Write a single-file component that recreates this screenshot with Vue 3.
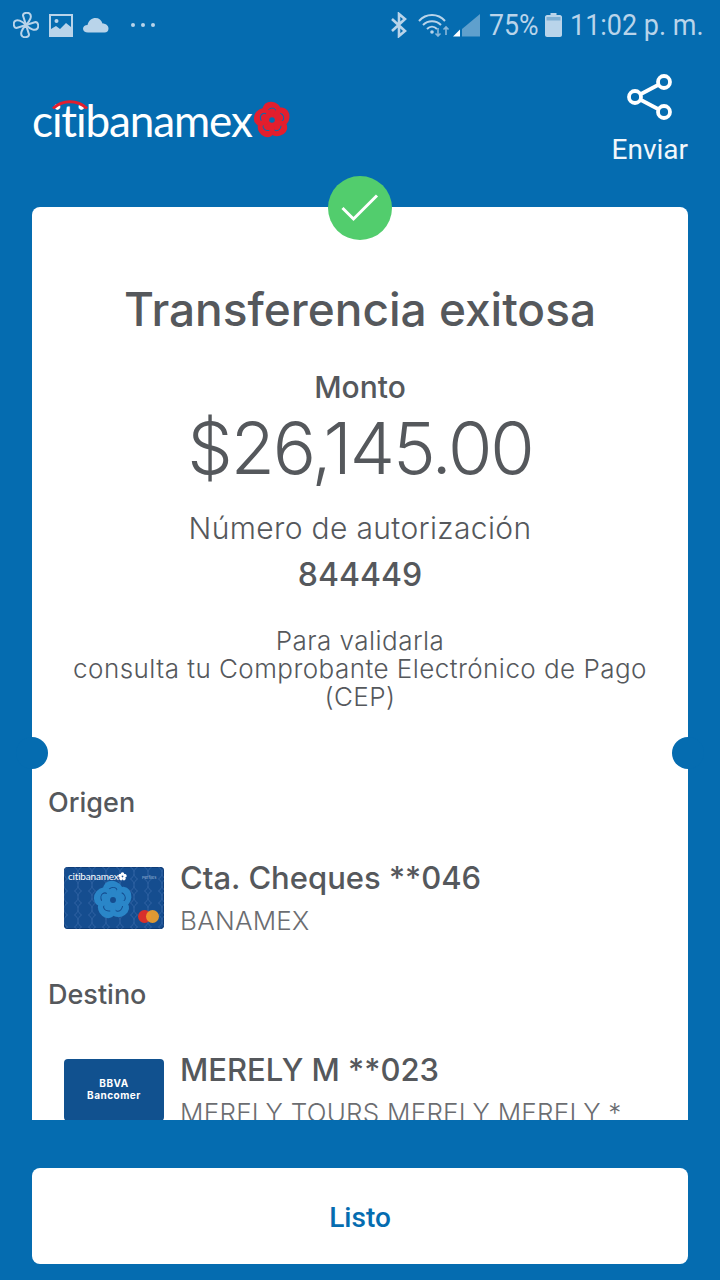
<template>
  <div class="screen">
    <div class="status">
      <div class="status-left">
        <svg class="ic" width="26" height="26" viewBox="0 0 26 26" fill="none" stroke="#b9d4ea" stroke-width="2">
          <path v-for="a in blades" :key="a" :transform="`rotate(${a} 13 13)`" d="M13 13L10 3.500C10 1 14 0 16.500 1.500 19.500 4 17 9 13 13z" />
        </svg>
        <svg class="ic" width="24" height="24" viewBox="0 0 24 24">
          <path fill="#b9d4ea" fill-rule="evenodd" d="M0 1h24v23H0zM2 3v19h20V3z" />
          <circle cx="7.500" cy="8" r="2" fill="#b9d4ea" />
          <path fill="#b9d4ea" d="M2 22v-6l5-3 4 3 6-6 5 4v8z" />
        </svg>
        <svg class="ic" width="26" height="16" viewBox="0 0 26 16">
          <path fill="#b9d4ea" d="M5 15.500C2 15.500 0 14 0 11.800 0 9.500 2 8 4.500 8 5.500 3.500 9 1 12.500 1c3.500 0 6 2 7 5.500 3.500 0 6 2.200 6 5 0 2.500-1.500 4-4 4z" />
        </svg>
        <div class="dots"><i></i><i></i><i></i></div>
      </div>
      <div class="status-right">
        <svg width="18" height="26" viewBox="0 0 18 26" fill="none" stroke="#b9d4ea" stroke-width="2.600">
          <path d="M2 7l13 12-6 5V2l6 5L2 19" />
        </svg>
        <svg class="wifi" width="36" height="24" viewBox="0 0 36 24" fill="none" stroke="#b9d4ea" stroke-width="2">
          <path d="M1 8c7-8 19-8 26 0" />
          <path d="M5 12c5-5 13-5 18 0" />
          <path d="M9 16c3-3 7-3 10 0" />
          <circle cx="14" cy="19" r="1.800" fill="#b9d4ea" stroke="none" />
          <path d="M20 15v8M17.500 20.500l2.500 2.500 2.500-2.500" stroke="#8ab8da" stroke-width="1.600" />
          <path d="M28 22v-8M25.500 16.500l2.500-2.500 2.500 2.500" stroke="#8ab8da" stroke-width="1.600" />
        </svg>
        <svg class="signal" width="27" height="24" viewBox="0 0 27 24">
          <path fill="#fff" d="M0 23.500l7-7v7z" />
          <path fill="#b9d4ea" fill-opacity=".5" d="M9 23.500V16L27 1v22.500z" />
        </svg>
        <span class="pct">75%</span>
        <svg class="batt" width="17" height="24" viewBox="0 0 17 24">
          <path fill="#b9d4ea" d="M5.500 0h6v2H15c1 0 2 1 2 2v18c0 1-1 2-2 2H2c-1 0-2-1-2-2V4c0-1 1-2 2-2h3.500z" />
          <path fill="#7fb0d4" d="M1.500 4h14v3.500h-14z" />
        </svg>
        <span class="time">11:02 p. m.</span>
      </div>
    </div>

    <div class="head">
      <div class="logo">
        <svg class="logo-arc" width="36" height="10" viewBox="0 0 36 10" fill="none">
          <path d="M1 9.500C10.500 .5 25.500 .5 35 9.500" stroke="#e31e2d" stroke-width="3" />
        </svg>
        <span class="logo-text">citibanamex</span>
        <svg class="logo-flower" width="38" height="38" viewBox="0 0 38 38">
          <g v-for="a in petals" :key="a" :transform="`rotate(${a} 19 19)`">
            <ellipse cx="19" cy="9" rx="9.500" ry="8" transform="rotate(22 19 9)" fill="#e31e2d" />
            <path d="M15 9c2-2 5-2.500 7-1 1 1 1.500 2 1 3.500" fill="none" stroke="#056cb0" stroke-width="1" />
          </g>
          <circle cx="19" cy="19" r="2.800" fill="#056cb0" />
        </svg>
      </div>
      <div class="share">
        <svg width="46" height="46" viewBox="0 0 46 46" fill="none" stroke="#fff" stroke-width="3.800">
          <circle cx="37" cy="8" r="6" />
          <circle cx="8" cy="23" r="6" />
          <circle cx="37" cy="38" r="6" />
          <path d="M13.500 20.200l18-9.400M13.500 25.800l18 9.400" />
        </svg>
        <span>Enviar</span>
      </div>
    </div>

    <div class="card-wrap">
      <div class="check">
        <svg width="40" height="30" viewBox="0 0 40 30" fill="none" stroke="#fff" stroke-width="3">
          <path d="M2.500 15l11 11L37 2.500" />
        </svg>
      </div>
      <i class="notch left"></i>
      <i class="notch right"></i>
      <div class="card">
        <h1>Transferencia exitosa</h1>
        <div class="monto-label">Monto</div>
        <div class="monto">$26,145.00</div>
        <div class="auth-label">Número de autorización</div>
        <div class="auth">844449</div>
        <p class="note">Para validarla<br />consulta tu Comprobante Electrónico de Pago<br />(CEP)</p>

        <div class="section">Origen</div>
        <div class="acct">
          <div class="bank-card">
            <svg class="card-bg" width="100" height="62">
              <defs>
                <pattern id="rings" width="14" height="12" patternUnits="userSpaceOnUse">
                  <circle cx="7" cy="6" r="7" fill="none" stroke="#3a6cab" stroke-width=".6" />
                </pattern>
              </defs>
              <rect width="100" height="62" fill="url(#rings)" />
            </svg>
            <div class="mini-logo">citibanamex</div>
            <svg class="mini-mark" width="9" height="9" viewBox="0 0 38 38">
              <circle v-for="a in petals" :key="a" :transform="`rotate(${a} 19 19)`" cx="19" cy="8.500" r="7.500" fill="#fff" />
            </svg>
            <span class="perfiles">Perfiles</span>
            <svg class="mini-flower" width="40" height="40" viewBox="0 0 38 38">
              <g v-for="a in petals" :key="a" :transform="`rotate(${a} 19 19)`">
                <ellipse cx="19" cy="9" rx="9.500" ry="8" transform="rotate(22 19 9)" fill="#2a86c8" />
                <path d="M15 9c2-2 5-2.500 7-1 1 1 1.500 2 1 3.500" fill="none" stroke="#154d8f" stroke-width="1" />
              </g>
              <circle cx="19" cy="19" r="2.800" fill="#154d8f" />
            </svg>
            <i class="mc red"></i>
            <i class="mc amber"></i>
          </div>
          <div class="acct-text">
            <div class="acct-name">Cta. Cheques **046</div>
            <div class="acct-sub">BANAMEX</div>
          </div>
        </div>

        <div class="section dest">Destino</div>
        <div class="acct">
          <div class="bbva">BBVA<br />Bancomer</div>
          <div class="acct-text">
            <div class="acct-name">MERELY M **023</div>
            <div class="acct-sub">MERELY TOURS MERELY MERELY *</div>
          </div>
        </div>
      </div>
    </div>

    <div class="foot">
      <button class="done">Listo</button>
    </div>
  </div>
</template>

<script setup>
const petals = [0, 72, 144, 216, 288]
const blades = [0, 90, 180, 270]
</script>

<style>
body {
  margin: 0;
}
</style>

<style scoped>
.screen {
  width: 720px;
  height: 1280px;
  background: #056cb0;
  display: flex;
  flex-direction: column;
  overflow: hidden;
  font-family: Inter, "Open Sans", sans-serif;
  color: #55585c;
}
.status {
  height: 48px;
  flex: none;
  display: flex;
  justify-content: space-between;
  align-items: center;
  padding: 2px 17px 0 13px;
  box-sizing: border-box;
}
.status-left,
.status-right {
  display: flex;
  align-items: center;
}
.status-left .ic {
  margin-right: 10px;
}
.dots {
  display: flex;
  gap: 6px;
  margin-left: 12px;
}
.dots i {
  width: 4px;
  height: 4px;
  border-radius: 50%;
  background: #b9d4ea;
}
.status-right {
  font-family: Roboto, sans-serif;
  font-size: 29px;
  color: #b9d4ea;
}
.wifi {
  margin-left: 10px;
}
.signal {
  margin-left: -1px;
}
.pct {
  margin-left: 9px;
  width: 48px;
  white-space: nowrap;
  transform: scaleX(0.92);
  transform-origin: left;
}
.batt {
  margin-left: 8px;
}
.time {
  margin-left: 8px;
  width: 133px;
  white-space: nowrap;
  transform: scaleX(0.93);
  transform-origin: left;
}
.head {
  height: 152px;
  flex: none;
  display: flex;
  justify-content: space-between;
  padding: 26px 32px 0;
  box-sizing: border-box;
}
.logo {
  position: relative;
  display: flex;
  align-items: center;
  height: 48px;
  margin-top: 22px;
}
.logo-arc {
  position: absolute;
  left: 20px;
  top: 3px;
}
.logo-text {
  font-family: Lato, sans-serif;
  font-size: 44px;
  color: #fff;
  letter-spacing: -1.1px;
}
.logo-flower {
  margin-left: 1px;
}
.share {
  display: flex;
  flex-direction: column;
  align-items: center;
  color: #f2f7fb;
  font-family: Roboto, sans-serif;
  font-size: 28px;
  gap: 13px;
}
.card-wrap {
  position: relative;
  flex: none;
  height: 913px;
  margin: 7px 32px 0;
}
.card {
  height: 100%;
  background: #fff;
  border-radius: 8px 8px 0 0;
  overflow: hidden;
  text-align: center;
  padding-top: 76px;
  box-sizing: border-box;
}
.check {
  position: absolute;
  left: 296px;
  top: -31px;
  width: 64px;
  height: 64px;
  border-radius: 50%;
  background: #52cd6d;
  display: flex;
  align-items: center;
  justify-content: center;
}
.notch {
  position: absolute;
  top: 530px;
  width: 32px;
  height: 32px;
  border-radius: 50%;
  background: #056cb0;
}
.notch.left {
  left: -16px;
}
.notch.right {
  right: -16px;
}
h1 {
  margin: 0;
  font-size: 46px;
  line-height: 52px;
  font-weight: 500;
}
.monto-label {
  margin-top: 32px;
  font-size: 30px;
  line-height: 40px;
  font-weight: 500;
}
.monto {
  margin-top: 3px;
  font-size: 72px;
  line-height: 76px;
  font-weight: 300;
  letter-spacing: -2.1px;
}
.auth-label {
  margin-top: 22px;
  font-size: 30px;
  line-height: 40px;
  font-weight: 300;
  letter-spacing: 0.35px;
}
.auth {
  margin-top: 7px;
  font-size: 32px;
  line-height: 40px;
  font-weight: 500;
}
.note {
  margin: 32px 0 0;
  font-size: 26px;
  line-height: 28px;
  font-weight: 300;
  letter-spacing: 0.45px;
}
.section {
  margin-top: 74px;
  padding-left: 16px;
  text-align: left;
  font-size: 27px;
  line-height: 36px;
  font-weight: 500;
}
.section.dest {
  margin-top: 38px;
}
.acct {
  display: flex;
  padding: 37px 16px 0 32px;
  text-align: left;
  gap: 16px;
}
.bank-card {
  position: relative;
  width: 100px;
  height: 62px;
  flex: none;
  margin-top: 9px;
  border-radius: 4px;
  background: #154d8f;
  box-shadow: inset 0 0 0 1px #0f3d78;
  overflow: hidden;
}
.card-bg {
  position: absolute;
  left: 0;
  top: 0;
}
.mini-logo {
  position: absolute;
  left: 4px;
  top: 3px;
  color: #fff;
  font-family: Lato, sans-serif;
  font-size: 10px;
  letter-spacing: -0.2px;
}
.mini-mark {
  position: absolute;
  left: 54px;
  top: 5px;
}
.perfiles {
  position: absolute;
  left: 78px;
  top: 8px;
  color: #9db8d6;
  font-size: 4px;
}
.mini-flower {
  position: absolute;
  left: 29px;
  top: 13px;
}
.mc {
  position: absolute;
  top: 43px;
  width: 13px;
  height: 13px;
  border-radius: 50%;
}
.mc.red {
  left: 74px;
  background: #d8302c;
}
.mc.amber {
  left: 82px;
  background: #f0a02c;
  opacity: 0.92;
}
.bbva {
  width: 100px;
  height: 62px;
  flex: none;
  margin-top: 9px;
  border-radius: 4px;
  background: #11518f;
  color: #fff;
  font-size: 10px;
  line-height: 12px;
  font-weight: 700;
  text-align: center;
  padding-top: 18px;
  box-sizing: border-box;
  letter-spacing: 0.5px;
}
.acct-name {
  font-size: 31px;
  line-height: 40px;
  font-weight: 500;
  white-space: nowrap;
}
.acct-sub {
  font-size: 26px;
  line-height: 36px;
  margin-top: 5px;
  color: #6b6d71;
  white-space: nowrap;
  font-weight: 300;
  letter-spacing: 0.25px;
}
.foot {
  flex: 1;
  padding: 48px 32px 16px;
  box-sizing: border-box;
  display: flex;
}
.done {
  flex: 1;
  border: 0;
  border-radius: 8px;
  background: #fff;
  color: #056cb0;
  font-family: Roboto, sans-serif;
  font-size: 28px;
  font-weight: 500;
  padding-top: 4px;
}
</style>
